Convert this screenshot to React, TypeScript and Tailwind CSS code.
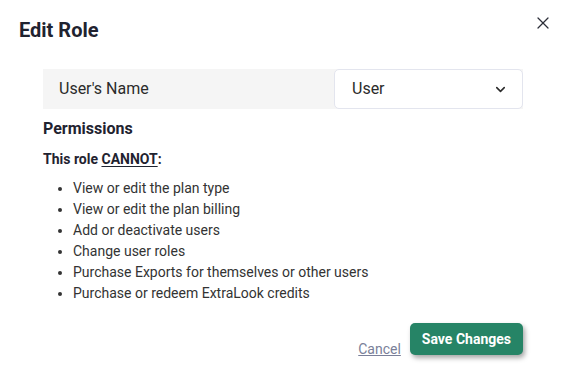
import { ChevronDown, X } from "lucide-react";

const restrictions = [
  "View or edit the plan type",
  "View or edit the plan billing",
  "Add or deactivate users",
  "Change user roles",
  "Purchase Exports for themselves or other users",
  "Purchase or redeem ExtraLook credits",
];

export default function App() {
  return (
    <div className="w-[563px] h-[369px] bg-white font-['Roboto',sans-serif] text-[#212529] relative">
      <div className="flex flex-col pl-[19px] pr-[40px] pt-[16px]">
        <div className="flex items-center justify-between">
          <h2 className="text-[20px] leading-[28px] font-bold text-[#1f2330]">Edit Role</h2>
        </div>

        <div className="pl-[24px] pt-[25px]">
          <div className="flex h-[40px] bg-[#f5f5f5]">
            <div className="flex-1 flex items-center pl-[16px] text-[16px] text-[#2b2b2b]">User's Name</div>
            <button
              type="button"
              className="w-[189px] flex items-center justify-between pl-[17px] pr-[14px] bg-white border border-[#e3e5ee] rounded-[5px] text-[16px] text-[#2b2b2b]"
            >
              <span>User</span>
              <ChevronDown className="size-[15px]" strokeWidth={2.5} />
            </button>
          </div>

          <h3 className="mt-[10px] text-[16px] leading-[20px] font-bold text-[#1f2330]">Permissions</h3>
          <p className="mt-[10px] text-[14px] leading-[20px] font-bold text-[#1f2330]">
            This role <span className="underline underline-offset-2">CANNOT</span>:
          </p>
          <ul className="mt-[9px] pl-[30px] list-disc text-[14px] leading-[21px] text-[#333]">
            {restrictions.map((r) => (
              <li key={r}>{r}</li>
            ))}
          </ul>
        </div>

        <div className="flex items-end justify-end gap-[9px] mt-[19px]">
          <a href="#" className="text-[14px] leading-[20px] text-[#7a7f99] underline mb-[-4px]">Cancel</a>
          <button
            type="button"
            className="h-[32px] px-[12px] rounded-[5px] bg-[#268466] text-white text-[14px] font-bold shadow-[2px_3px_5px_rgba(0,0,0,0.35)]"
          >
            Save Changes
          </button>
        </div>
      </div>

      <button type="button" className="absolute left-[533px] top-[13px] text-[#2d2f3a]">
        <X className="size-[20px]" strokeWidth={1.5} />
      </button>
    </div>
  );
}
